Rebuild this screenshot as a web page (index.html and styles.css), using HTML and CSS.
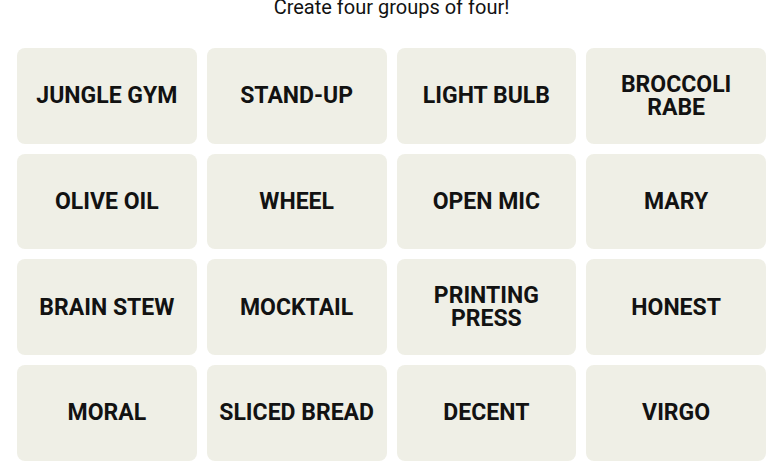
FILE: index.html
```html
<!DOCTYPE html>
<html lang="en">
<head>
    <meta charset="UTF-8">
    <meta name="viewport" content="width=device-width, initial-scale=1.0">
    <title>Connections</title>
    <link rel="stylesheet" href="styles.css">
</head>
<body>
    <div class="game">
        <p class="prompt">Create four groups of four!</p>
        <div class="board">
            <button class="card">JUNGLE GYM</button>
            <button class="card">STAND-UP</button>
            <button class="card">LIGHT BULB</button>
            <button class="card">BROCCOLI RABE</button>
            <button class="card">OLIVE OIL</button>
            <button class="card">WHEEL</button>
            <button class="card">OPEN MIC</button>
            <button class="card">MARY</button>
            <button class="card">BRAIN STEW</button>
            <button class="card">MOCKTAIL</button>
            <button class="card">PRINTING PRESS</button>
            <button class="card">HONEST</button>
            <button class="card">MORAL</button>
            <button class="card">SLICED BREAD</button>
            <button class="card">DECENT</button>
            <button class="card">VIRGO</button>
        </div>
    </div>
</body>
</html>
```

FILE: styles.css
```css
body {
    margin: 0;
    background-color: #fff;
    font-family: Roboto, "Liberation Sans", sans-serif;
    color: #121212;
}
.game {
    padding: 0 6px 0 17px;
}
.prompt {
    margin: -5px 0 0 0;
    height: 53px;
    text-align: center;
    font-size: 20px;
    font-weight: 400;
    line-height: 24px;
}
.board {
    display: grid;
    grid-template-columns: repeat(4, 1fr);
    grid-auto-rows: 95.67px;
    gap: 10px;
}
.card {
    display: flex;
    align-items: center;
    justify-content: center;
    background-color: #efefe6;
    border: none;
    border-radius: 8px;
    padding: 0 4px;
    font-family: Roboto, "Liberation Sans", sans-serif;
    font-size: 23px;
    font-weight: 700;
    line-height: 23px;
    color: #121212;
    text-align: center;
    cursor: pointer;
}
```
